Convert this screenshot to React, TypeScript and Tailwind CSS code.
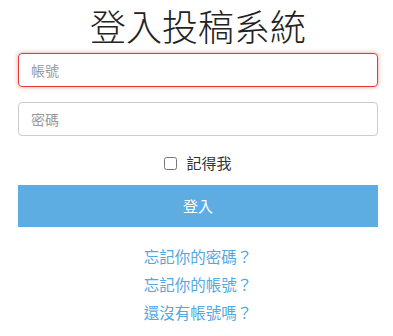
import React from 'react';

export default function App() {
  return (
    <div className="min-h-screen bg-white pl-[18px] pr-[15px] pt-0 text-[#333] font-['Noto_Sans_CJK_TC','Noto_Sans',sans-serif]">
      {/* Title */}
      <h1 className="text-center text-[36px] leading-[51px] font-light text-[#222] mb-[2px]">登入投稿系統</h1>

      {/* Form */}
      <form className="flex flex-col" onSubmit={(e) => e.preventDefault()}>
        <input
          type="text"
          placeholder="帳號"
          className="h-[34px] w-full rounded-[4px] border border-[#e53935] px-3 text-[14px] text-[#555] placeholder:text-[#999] outline-none shadow-[0_0_4px_rgba(229,57,53,0.5)] caret-[#c62828]"
        />
        <input
          type="password"
          placeholder="密碼"
          className="mt-[15px] h-[34px] w-full rounded-[4px] border border-[#ccc] px-3 text-[14px] text-[#555] placeholder:text-[#999] outline-none"
        />

        <label className="mt-[18px] flex h-[19px] items-center justify-center gap-[9px] text-[15px] text-[#333]">
          <input type="checkbox" className="h-[13px] w-[13px]" />
          <span>記得我</span>
        </label>

        <button
          type="submit"
          className="mt-[12px] h-[42px] w-full bg-[#5dade2] text-[15px] text-white"
        >
          登入
        </button>
      </form>

      {/* Links */}
      <div className="mt-[19px] flex flex-col items-center gap-[8px] text-[15.5px] leading-[20px] text-[#52a8e0]">
        <a href="#">忘記你的密碼？</a>
        <a href="#">忘記你的帳號？</a>
        <a href="#">還沒有帳號嗎？</a>
      </div>
    </div>
  );
}
